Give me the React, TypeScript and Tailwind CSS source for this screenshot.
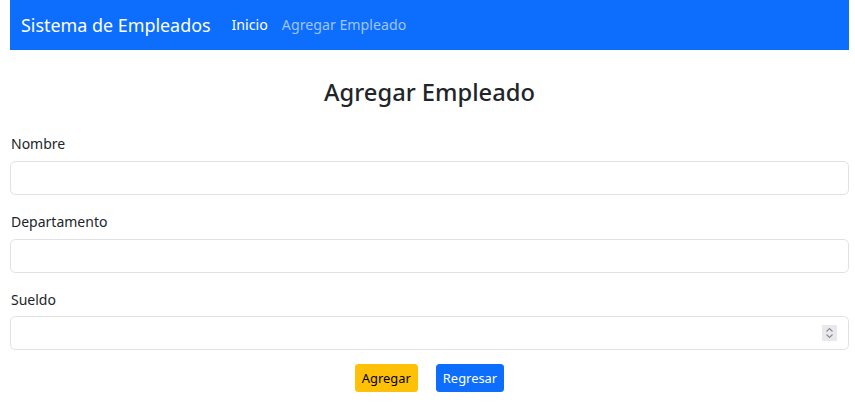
import React from "react";

export default function App() {
  const inputCls =
    "block w-full h-[34px] border border-[#dee2e6] rounded-[5.25px] px-[10.5px] text-[14px] outline-none";
  return (
    <div className="pl-[10px] pr-[6px] text-[#212529] bg-white min-h-[407px]" style={{ fontFamily: '"Noto Sans", sans-serif' }}>
      <nav className="h-[50px] bg-[#0d6efd] flex items-center pl-[11px]">
        <span className="text-[17.9px] text-white mr-[14px] leading-[1.5]">Sistema de Empleados</span>
        <a className="text-[14.2px] text-white px-[7px] leading-[1.5]">Inicio</a>
        <a className="text-[14.2px] text-white/60 px-[7px] leading-[1.5]">Agregar Empleado</a>
      </nav>
      <h3 className="mt-[27.5px] mb-[27.5px] text-center text-[23.7px] font-medium leading-[1.2]">Agregar Empleado</h3>
      <form className="flex flex-col" onSubmit={(e) => e.preventDefault()}>
        <div className="mb-[16px]">
          <label className="block text-[14px] leading-[1.5] mb-[7px] pl-px">Nombre</label>
          <input type="text" className={inputCls} />
        </div>
        <div className="mb-[16px]">
          <label className="block text-[14px] leading-[1.5] mb-[7px] pl-px">Departamento</label>
          <input type="text" className={inputCls} />
        </div>
        <div className="mb-[14px]">
          <label className="block text-[14px] leading-[1.5] mb-[6px] pl-px">Sueldo</label>
          <div className="relative">
            <input type="text" className={inputCls} />
            <div className="absolute right-[12px] top-[9px] w-[15px] h-[16px] bg-[#e9e9ed] flex items-center justify-center">
              <svg width="9" height="12" viewBox="0 0 9 12" fill="none" stroke="#8a8a8a" strokeWidth="1.1">
                <path d="M1.5 4.5 L4.5 1.5 L7.5 4.5" />
                <path d="M1.5 7.5 L4.5 10.5 L7.5 7.5" />
              </svg>
            </div>
          </div>
        </div>
        <div className="flex justify-center gap-[18px]">
          <button type="submit" className="h-[28px] px-[7px] bg-[#ffc107] text-black text-[12.9px] rounded-[3.5px] leading-[1.5]">Agregar</button>
          <button type="button" className="h-[28px] px-[7px] bg-[#0d6efd] text-white text-[12.9px] rounded-[3.5px] leading-[1.5]">Regresar</button>
        </div>
      </form>
    </div>
  );
}
